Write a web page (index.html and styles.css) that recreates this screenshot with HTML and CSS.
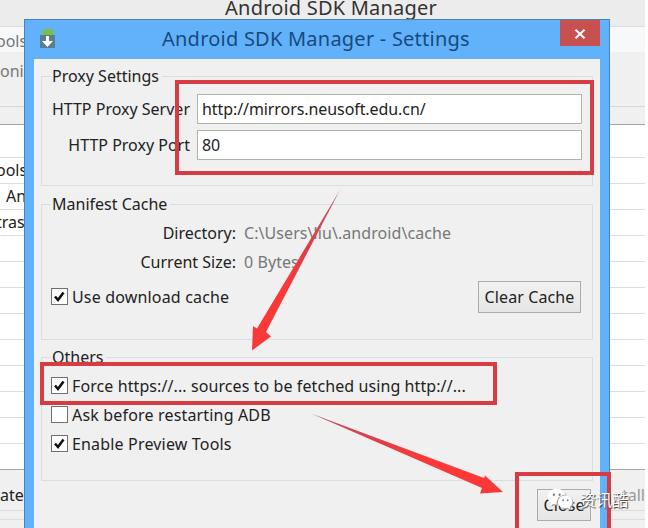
FILE: index.html
```
<!DOCTYPE html>
<html lang="en">
<head>
    <meta charset="UTF-8">
    <meta name="viewport" content="width=device-width, initial-scale=1.0">
    <title>Android SDK Manager - Settings</title>
    <link rel="stylesheet" href="styles.css">
</head>
<body>
    <!-- Main window behind the dialog -->
    <div class="manager">
        <div class="manager-title"><span>Android SDK Manager</span></div>
        <div class="manager-menu">ools</div>
        <div class="manager-path">oni</div>
        <div class="manager-header"></div>
        <div class="manager-table">
            <div class="row first"></div>
            <div class="row">ools</div>
            <div class="row indent">An</div>
            <div class="row">tras</div>
            <div class="row"></div>
            <div class="row"></div>
            <div class="row"></div>
            <div class="row"></div>
            <div class="row"></div>
            <div class="row"></div>
            <div class="row"></div>
            <div class="row"></div>
            <div class="row"></div>
            <div class="row"></div>
        </div>
        <div class="manager-footer">
            <div class="footer-row"><span>ate</span><span class="disabled">tall</span></div>
            <div class="footer-line"></div>
        </div>
    </div>

    <div class="dialog">
        <div class="titlebar">
            <svg class="app-icon" width="16" height="22" viewBox="0 0 16 22">
                <path d="M2 8C2 4 4 2 8 2s6 2 6 6z" fill="#79bd4b"/>
                <path d="M3.500 1l2 3M12.500 1l-2 3" stroke="#79bd4b"/>
                <rect y="8" width="15" height="13" fill="#577e91"/>
                <path d="M6 9h3v5h4l-5.500 6L2 14h4z" fill="#fff"/>
            </svg>
            <span class="title">Android SDK Manager - Settings</span>
            <button class="close-x" aria-label="Close window">
                <svg width="12" height="10" viewBox="0 0 12 10">
                    <path d="M1.500.800l9 8.400M10.500.800l-9 8.400" stroke="#fff" stroke-width="2"/>
                </svg>
            </button>
        </div>

        <div class="client">
            <fieldset class="group proxy">
                <legend>Proxy Settings</legend>
                <div class="form">
                    <label for="server">HTTP Proxy Server</label>
                    <input id="server" type="text" value="http://mirrors.neusoft.edu.cn/">
                    <label for="port">HTTP Proxy Port</label>
                    <input id="port" type="text" value="80">
                </div>
            </fieldset>

            <fieldset class="group cache">
                <legend>Manifest Cache</legend>
                <div class="info">
                    <span class="name">Directory:</span><span class="value">C:\Users\liu\.android\cache</span>
                    <span class="name">Current Size:</span><span class="value">0 Bytes</span>
                </div>
                <div class="cache-row">
                    <div class="check">
                        <span class="box"><svg width="15" height="15" viewBox="0 0 15 15"><path d="M3 7.500l3 3.500L11.500 3.500"/></svg></span>
                        <span>Use download cache</span>
                    </div>
                    <button class="btn">Clear Cache</button>
                </div>
            </fieldset>

            <fieldset class="group others">
                <legend>Others</legend>
                <div class="check">
                    <span class="box"><svg width="15" height="15" viewBox="0 0 15 15"><path d="M3 7.500l3 3.500L11.500 3.500"/></svg></span>
                    <span class="force">Force https://... sources to be fetched using http://...</span>
                </div>
                <div class="check">
                    <span class="box"></span>
                    <span>Ask before restarting ADB</span>
                </div>
                <div class="check">
                    <span class="box"><svg width="15" height="15" viewBox="0 0 15 15"><path d="M3 7.500l3 3.500L11.500 3.500"/></svg></span>
                    <span>Enable Preview Tools</span>
                </div>
            </fieldset>

            <div class="actions">
                <button class="btn btn-close">Close</button>
            </div>
        </div>
    </div>

    <!-- Red boxes and arrows -->
    <svg class="marks" width="648" height="528" viewBox="0 0 648 528">
        <defs>
            <linearGradient id="down" x1="0" y1="0" x2="0" y2="1">
                <stop offset="0" stop-color="#b9526a"/>
                <stop offset=".4" stop-color="#e33d43"/>
                <stop offset=".6" stop-color="#fb3838"/>
            </linearGradient>
            <linearGradient id="right" x1="0" y1="0" x2="1" y2="0">
                <stop offset="0" stop-color="#b9526a"/>
                <stop offset=".4" stop-color="#e33d43"/>
                <stop offset=".6" stop-color="#fb3838"/>
            </linearGradient>
        </defs>
        <g fill="none" stroke="#d63d43" stroke-width="4">
            <rect x="177" y="82" width="415" height="91"/>
            <rect x="42" y="364" width="453" height="39"/>
            <rect x="517" y="474" width="92" height="60"/>
        </g>
        <path d="M340 190L266 332L271 336.500L252 350.500L253 326L257 328.500Z" fill="url(#down)"/>
        <path d="M311 413.500L484 478L485 475.500L503 492L480 493.500L482 488Z" fill="url(#right)"/>
    </svg>

    <div class="watermark">
        <svg width="26" height="22" viewBox="0 0 34 26" preserveAspectRatio="none">
            <path d="M13 1C6 1 1 5 1 10.500c0 3 1.500 5.500 4.500 7.200L4.500 21l4-2 4 .8C12 13 17 8 24.500 8 23 4 18.500 1 13 1z"/>
            <path d="M24 9c-5.500 0-9.500 3.300-9.500 7.500S18.500 24 24 24l3-.4 3.500 1.700-.8-2.800c2.300-1.500 3.500-3.500 3.500-6C33.200 12.300 29 9 24 9z"/>
            <g fill="#777"><circle cx="9" cy="8" r="1.400"/><circle cx="16.500" cy="8" r="1.400"/><circle cx="21" cy="14.500" r="1.200"/><circle cx="27" cy="14.500" r="1.200"/></g>
        </svg>
        <span>资讯酷</span>
    </div>
</body>
</html>
```
FILE: styles.css
```
* {
    box-sizing: border-box;
}
body {
    margin: 0;
    width: 648px;
    height: 528px;
    overflow: hidden;
    position: relative;
    background: #fff;
    font-family: "Noto Sans", "Noto Sans CJK SC", sans-serif;
    font-size: 16px;
    line-height: 20px;
    color: #222;
}

/* main window */
.manager {
    width: 645px;
    height: 528px;
    display: flex;
    flex-direction: column;
    background: #f0f0f0;
}
.manager-title {
    height: 27px;
    padding-left: 17px;
    background: #ececec;
    border-bottom: 1px solid #dcdcdc;
    text-align: center;
    font-size: 20px;
    line-height: 15px;
    letter-spacing: 0.2px;
    color: #333;
}
.manager-menu {
    height: 25px;
    line-height: 28px;
    background: #f7f8fa;
    color: #777;
}
.manager-menu,
.row {
    text-indent: -4px;
}
.manager-path {
    height: 55px;
    line-height: 39px;
    border-bottom: 1px solid #d8d8d8;
    color: #777;
}
.manager-header {
    height: 18px;
    border-bottom: 1px solid #a5a5a5;
}
.manager-table {
    height: 345px;
    background: #fff;
    border-bottom: 1px solid #a5a5a5;
    overflow: hidden;
}
.row {
    height: 26px;
    line-height: 25px;
    border-bottom: 1px solid #dedede;
}
.row.first {
    height: 33px;
}
.row.indent {
    padding-left: 10px;
}
.manager-footer {
    flex: 1;
}
.footer-row {
    display: flex;
    justify-content: space-between;
    height: 40px;
    line-height: 51px;
}
.disabled {
    color: #999;
}
.footer-line {
    height: 10px;
    border-top: 1px solid #dcdcdc;
    border-bottom: 1px solid #dcdcdc;
}

/* settings dialog */
.dialog {
    position: absolute;
    left: 24px;
    top: 19px;
    width: 586px;
    height: 520px;
    padding: 0 9px;
    background: #62b2fb;
    border: 1px solid #4b83b5;
}
.titlebar {
    height: 39px;
    display: flex;
    align-items: flex-start;
}
.app-icon {
    margin: 7px 0 0 6px;
}
.title {
    flex: 1;
    padding-left: 106px;
    font-size: 20px;
    line-height: 38px;
    letter-spacing: 0.23px;
    color: #174a7c;
    white-space: nowrap;
}
.close-x {
    width: 40px;
    height: 26px;
    padding: 2px 0 0;
    border: none;
    background: #c75050;
    display: flex;
    align-items: center;
    justify-content: center;
}
.client {
    height: 480px;
    padding: 7px 7px 0;
    background: #f0f0f0;
}
.group {
    min-width: 0;
    margin: 0 0 8px;
    padding: 0 9px;
    border: 1px solid #d9dfe0;
}
legend {
    height: 20px;
    padding: 0 3px 0 1px;
}
.proxy {
    height: 120px;
}
.form {
    display: grid;
    grid-template-columns: 139px 385px;
    grid-auto-rows: 30px;
    gap: 6px 7px;
    padding-top: 8px;
    align-items: center;
    text-align: right;
}
.form label {
    white-space: nowrap;
}
.form input {
    width: 385px;
    height: 30px;
    padding: 0 4px;
    border: 1px solid #abb5ab;
    background: #fff;
    font: inherit;
    letter-spacing: -0.08px;
    color: #222;
}
.cache {
    height: 146px;
    margin-bottom: 7px;
}
.info {
    display: grid;
    grid-template-columns: 185px 1fr;
    grid-auto-rows: 29px;
    gap: 0 8px;
    padding-top: 5px;
    line-height: 29px;
}
.info .name {
    text-align: right;
}
.info .value {
    letter-spacing: 0.07px;
    color: #777;
}
.cache-row {
    display: flex;
    align-items: center;
    justify-content: space-between;
    height: 32px;
    margin-top: 4px;
    padding-right: 2px;
}
.cache-row .check {
    padding-bottom: 1px;
}
.others {
    height: 134px;
}
.others .check {
    height: 29px;
}
.others .check:first-of-type {
    margin-top: 4px;
}
.check {
    display: flex;
    align-items: center;
    gap: 4px;
    letter-spacing: 0.17px;
    white-space: nowrap;
}
.check .force {
    letter-spacing: 0.09px;
}
.box {
    width: 17px;
    height: 17px;
    border: 1px solid #707070;
    background: #fff;
    letter-spacing: 0;
}
.box svg {
    display: block;
    fill: none;
    stroke: #111;
    stroke-width: 2.6;
}
.btn {
    width: 103px;
    height: 32px;
    padding: 0;
    border: 1px solid #acacac;
    background: linear-gradient(#f1f1f1, #e6e6e6);
    font: inherit;
    letter-spacing: 0.1px;
    color: #222;
    white-space: nowrap;
}
.btn-close {
    width: 54px;
}
.actions {
    display: flex;
    justify-content: flex-end;
    padding-right: 2px;
}

/* overlays */
.marks {
    position: absolute;
    left: 0;
    top: 0;
}
.watermark {
    position: absolute;
    left: 547px;
    top: 485px;
    display: flex;
    align-items: center;
    gap: 7px;
    color: #fff;
    font-family: "Noto Sans CJK SC", sans-serif;
    line-height: 28px;
    text-shadow: 1px 1px 1px #333;
}
.watermark svg {
    fill: #fff;
    filter: drop-shadow(1px 1px 0 #999);
}
```
